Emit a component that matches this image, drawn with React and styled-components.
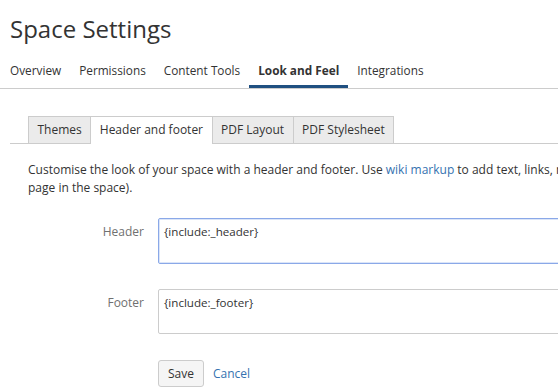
import React, { useState } from 'react'
import styled, { createGlobalStyle } from 'styled-components'

const GlobalStyle = createGlobalStyle`
  html, body {
    margin: 0;
    padding: 0;
    background: white;
    overflow: hidden;
  }
  body {
    font-family: "Open Sans", "Noto Sans", sans-serif;
    font-size: 12px;
    color: #333;
  }
`

const Page = styled.div`
  width: 1100px;
`
const Title = styled.h1`
  margin: 0;
  padding: 14px 0 0 10px;
  font-size: 24px;
  font-weight: 400;
  line-height: 30px;
  color: #333;
`
const Nav = styled.div`
  display: flex;
  margin-top: 16px;
  padding-left: 1px;
  border-bottom: 1px solid #ccc;
`
const NavItem = styled.div`
  box-sizing: border-box;
  height: 28px;
  padding: 0 9px;
  line-height: 20px;
  font-size: 11.8px;
  font-weight: ${p => (p.active ? 700 : 400)};
  color: #333;
  border-bottom: 3px solid ${p => (p.active ? '#205081' : 'transparent')};
`
const Body = styled.div`
  padding: 27px 0 0 10px;
`
const Tabs = styled.div`
  display: flex;
  padding-left: 18px;
  border-bottom: 1px solid #ccc;
`
const Tab = styled.div`
  box-sizing: border-box;
  height: ${p => (p.active ? 28 : 27)}px;
  line-height: 26px;
  padding: 0 8.5px;
  font-size: 12px;
  color: #333;
  background: ${p => (p.active ? 'white' : '#ebebeb')};
  border: 1px solid #ccc;
  border-left: ${p => (p.first ? '1px solid #ccc' : 'none')};
  border-bottom: none;
  margin-bottom: ${p => (p.active ? -1 : 0)}px;
`
const Intro = styled.p`
  margin: 17px 0 0 18px;
  font-size: 12px;
  line-height: 18px;
  color: #333;
`
const Link = styled.a`
  color: #3572b0;
  text-decoration: none;
  cursor: pointer;
`
const Field = styled.div`
  display: grid;
  grid-template-columns: 134px 1fr;
  column-gap: 14px;
  margin-top: ${p => p.top}px;
`
const Label = styled.label`
  text-align: right;
  font-size: 12px;
  line-height: 18px;
  color: #707070;
  padding-top: 5px;
`
const Area = styled.textarea`
  box-sizing: border-box;
  width: 500px;
  height: ${p => p.h}px;
  padding: 4px 5px;
  resize: none;
  font-family: inherit;
  font-size: 11.6px;
  line-height: 18px;
  color: #333;
  border: 1px solid ${p => (p.focused ? '#8aa8e8' : '#ccc')};
  box-shadow: ${p => (p.focused ? 'inset 0 0 0 1px #dbe5f8' : 'none')};
  border-radius: 2px;
  outline: none;
`
const Actions = styled.div`
  display: flex;
  align-items: center;
  gap: 9px;
  margin: 26px 0 0 148px;
  font-size: 12px;
`
const Button = styled.button`
  box-sizing: border-box;
  height: 27px;
  padding: 0 9px;
  font-family: inherit;
  font-size: 12px;
  color: #333;
  background: #f5f5f5;
  border: 1px solid #ccc;
  border-radius: 3px;
`

const navItems = ['Overview', 'Permissions', 'Content Tools', 'Look and Feel', 'Integrations']
const tabs = ['Themes', 'Header and footer', 'PDF Layout', 'PDF Stylesheet']

const App = () => {
  const [header, setHeader] = useState('{include:_header}')
  const [footer, setFooter] = useState('{include:_footer}')

  return (
    <Page>
      <GlobalStyle />
      <Title>Space Settings</Title>
      <Nav>
        {navItems.map(item => (
          <NavItem key={item} active={item === 'Look and Feel'}>{item}</NavItem>
        ))}
      </Nav>
      <Body>
        <Tabs>
          {tabs.map((t, i) => (
            <Tab key={t} first={i === 0} active={t === 'Header and footer'}>{t}</Tab>
          ))}
        </Tabs>
        <Intro>
          Customise the look of your space with a header and footer. Use <Link>wiki markup</Link> to add text, links, macros and images (for example, to include another
          <br />
          page in the space).
        </Intro>
        <Field top={21}>
          <Label>Header</Label>
          <Area focused h={46} value={header} onChange={e => setHeader(e.target.value)} />
        </Field>
        <Field top={25}>
          <Label>Footer</Label>
          <Area h={45} value={footer} onChange={e => setFooter(e.target.value)} />
        </Field>
        <Actions>
          <Button>Save</Button>
          <Link>Cancel</Link>
        </Actions>
      </Body>
    </Page>
  )
}

export default App
